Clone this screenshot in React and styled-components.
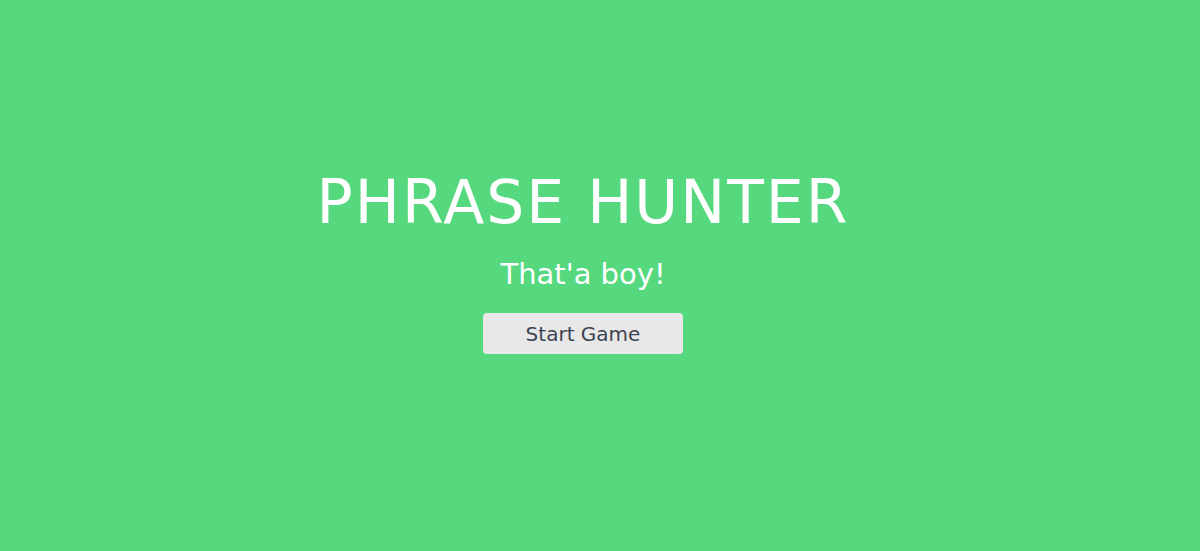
import React from "react";
import styled, { createGlobalStyle } from "styled-components";

const Global = createGlobalStyle`
  html, body { margin: 0; padding: 0; height: 100%; }
  body { background: #56d87f; font-family: "DejaVu Sans", sans-serif; }
  #root { height: 100%; }
`;

const Overlay = styled.div`
  box-sizing: border-box;
  height: 551px;
  display: flex;
  flex-direction: column;
  align-items: center;
  padding: 166px 34px 0 0;
  background: #56d87f;
`;

const Title = styled.h1`
  margin: 0;
  font-size: 60px;
  font-weight: 400;
  color: #ffffff;
  line-height: 72px;
  letter-spacing: 2px;
`;

const Banner = styled.h2`
  margin: 16px 0 0;
  font-size: 29px;
  font-weight: 400;
  color: #ffffff;
  line-height: 40px;
`;

const StartButton = styled.button`
  margin-top: 19px;
  width: 200px;
  height: 41px;
  border: none;
  border-radius: 4px;
  background: #e8e8e8;
  color: #3b4452;
  font-family: "DejaVu Sans", sans-serif;
  font-size: 20px;
  cursor: pointer;
`;

export default function App() {
  return (
    <>
      <Global />
      <Overlay>
        <Title>PHRASE HUNTER</Title>
        <Banner>That'a boy!</Banner>
        <StartButton>Start Game</StartButton>
      </Overlay>
    </>
  );
}
